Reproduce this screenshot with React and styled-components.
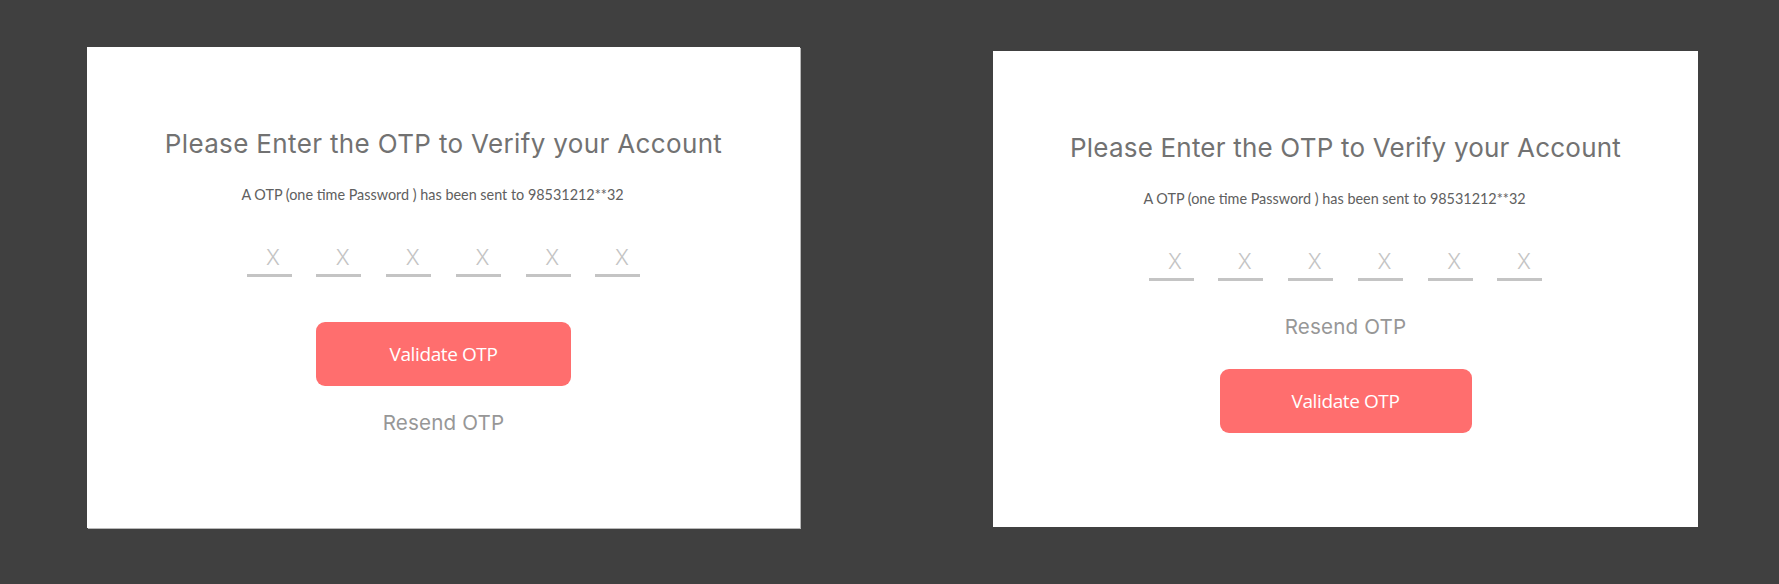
import React from "react";
import styled, { createGlobalStyle } from "styled-components";

const GlobalStyle = createGlobalStyle`
  html, body {
    margin: 0;
    padding: 0;
    background: #404040;
  }
`;

const Page = styled.div`
  display: flex;
  align-items: flex-start;
  gap: 193px;
  width: 1779px;
  height: 584px;
  padding: 47px 0 0 87px;
  box-sizing: border-box;
  background: #404040;
`;

const Card = styled.div`
  display: flex;
  flex-direction: column;
  align-items: center;
  width: ${(p) => p.$width}px;
  height: ${(p) => p.$height}px;
  margin-top: ${(p) => p.$offset}px;
  padding-top: 84px;
  box-sizing: border-box;
  background: #ffffff;
  box-shadow: ${(p) => (p.$edge ? "1px 1px 0 #b8b8b8" : "none")};
`;

const Title = styled.h2`
  margin: 0;
  font-family: Inter, "Noto Sans", sans-serif;
  font-weight: 400;
  font-size: 26px;
  letter-spacing: ${(p) => p.$spacing}px;
  line-height: 26px;
  color: #727272;
`;

const Subtitle = styled.p`
  margin: 30px 22px 0 0;
  font-family: Lato, "Liberation Sans", sans-serif;
  font-size: 14.4px;
  line-height: 15px;
  color: #606060;
`;

const OtpRow = styled.div`
  display: flex;
  gap: 24.8px;
  margin-top: 45.4px;
`;

const OtpInput = styled.input`
  width: 45px;
  height: 29.4px;
  box-sizing: border-box;
  padding: 0 0 5.4px 8px;
  border: none;
  border-bottom: 3px solid #c4c4c4;
  background: transparent;
  outline: none;
  text-align: center;
  font-family: Inter, "Noto Sans", sans-serif;
  font-weight: 300;
  font-size: 21px;
  line-height: 21px;
  color: #999;

  &::placeholder {
    color: #c4c4c4;
  }
`;

const ValidateButton = styled.button`
  width: ${(p) => p.$width}px;
  height: ${(p) => p.$height}px;
  margin-top: ${(p) => p.$gap}px;
  border: none;
  border-radius: 9px;
  background: #ff6e6e;
  color: #ffffff;
  font-family: "Open Sans", "Noto Sans", sans-serif;
  font-size: 19px;
  letter-spacing: -0.4px;
  line-height: 19px;
  cursor: pointer;
`;

const Resend = styled.a`
  display: block;
  margin-top: ${(p) => p.$gap}px;
  font-family: Inter, "Noto Sans", sans-serif;
  font-weight: 400;
  font-size: 20.6px;
  letter-spacing: 0.15px;
  line-height: 20px;
  color: #979797;
  cursor: pointer;
`;

const OtpCard = ({ width, height, offset, edge, resendFirst, spacing }) => (
  <Card $width={width} $height={height} $offset={offset} $edge={edge}>
    <Title $spacing={spacing}>Please Enter the OTP to Verify your Account</Title>
    <Subtitle>
      A OTP (one time Password ) has been sent to 98531212**32
    </Subtitle>
    <OtpRow>
      {[0, 1, 2, 3, 4, 5].map((i) => (
        <OtpInput key={i} maxLength={1} placeholder="X" />
      ))}
    </OtpRow>
    {resendFirst ? (
      <>
        <Resend $gap={36.4}>Resend OTP</Resend>
        <ValidateButton $width={252} $height={63.5} $gap={32.2}>
          Validate OTP
        </ValidateButton>
      </>
    ) : (
      <>
        <ValidateButton $width={255} $height={64} $gap={45.5}>
          Validate OTP
        </ValidateButton>
        <Resend $gap={26.3}>Resend OTP</Resend>
      </>
    )}
  </Card>
);

export default function App() {
  return (
    <>
      <GlobalStyle />
      <Page>
        <OtpCard width={713} height={481} offset={0} spacing={0.35} edge />
        <OtpCard width={705} height={476} offset={4} spacing={0.2} resendFirst />
      </Page>
    </>
  );
}
